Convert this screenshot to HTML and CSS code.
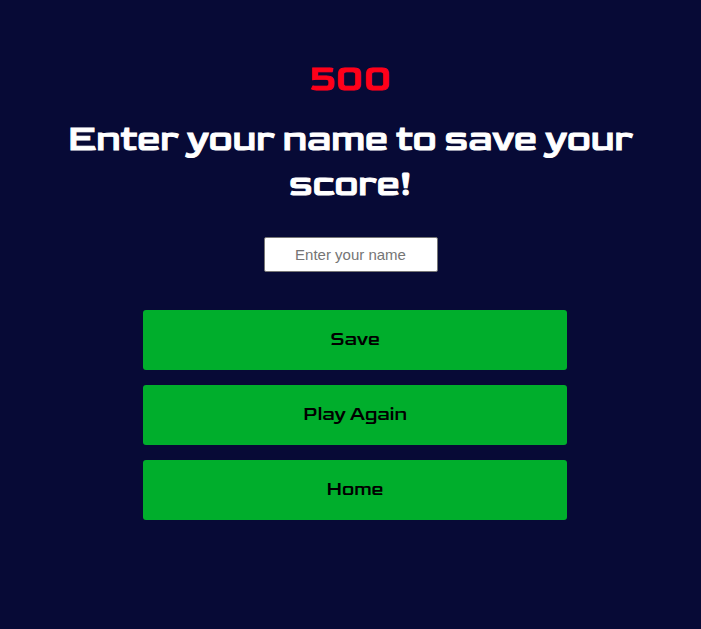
FILE: index.html
```html
<!DOCTYPE html>
<html lang="en">
<head>
<meta charset="utf-8">
<meta name="viewport" content="width=device-width, initial-scale=1">
<title>Save your score</title>
<link rel="stylesheet" href="styles.css">
</head>
<body>
<main class="end">
  <h1 class="score">500</h1>
  <form class="form">
    <h2 class="prompt"><label for="name">Enter your name to save your score!</label></h2>
    <input class="name" id="name" type="text" placeholder="Enter your name">
    <div class="actions">
      <button class="btn" type="submit">Save</button>
      <button class="btn" type="button">Play Again</button>
      <button class="btn" type="button">Home</button>
    </div>
  </form>
</main>
</body>
</html>
```
FILE: styles.css
```css
* {
  box-sizing: border-box;
}

body {
  margin: 0;
  min-height: 100vh;
  background: #070a36;
  color: #fff;
  font-family: Goldman, Orbitron, "DejaVu Sans", sans-serif;
}

.end {
  padding: 57px 56px;
}

.score,
.prompt {
  margin: 0;
  font-size: 37px;
  font-weight: 400;
  line-height: 45px;
  text-align: center;
  -webkit-text-stroke: 1px currentColor;
}

.score {
  margin-bottom: 15px;
  color: #ff0019;
}

.form {
  display: flex;
  flex-direction: column;
  align-items: center;
}

.name {
  width: 174px;
  height: 35px;
  margin: 30px 0 38px;
  padding: 0 8px;
  border: 1px solid #767676;
  border-radius: 2px;
  background: #fff;
  font: 15px "Liberation Sans", Arial, sans-serif;
  text-align: center;
}

.name::placeholder {
  color: #757575;
}

.actions {
  display: grid;
  gap: 15px;
  width: 72%;
  margin-left: 9px;
}

.btn {
  height: 60px;
  padding: 0 0 2px;
  border: 0;
  border-radius: 3px;
  background: #00ae2c;
  color: #000;
  font-family: inherit;
  font-size: 19px;
  font-weight: 400;
  cursor: pointer;
}
```
